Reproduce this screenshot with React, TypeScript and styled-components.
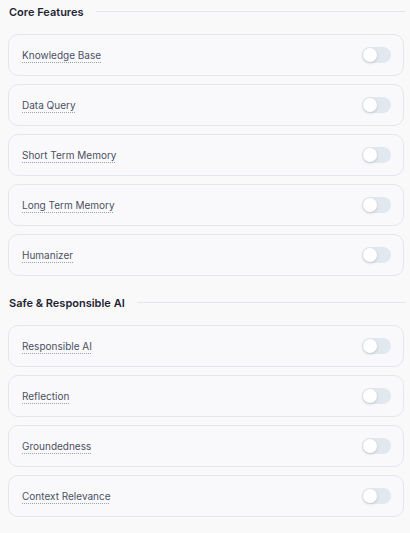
import React from 'react';
import { styled, createGlobalStyle } from 'styled-components';

const GlobalStyle = createGlobalStyle`
  html, body {
    margin: 0;
    padding: 0;
    background: #f9f9fa;
    font-family: Inter, "Noto Sans", sans-serif;
  }
`;

const sections = [
  {
    title: 'Core Features',
    items: ['Knowledge Base', 'Data Query', 'Short Term Memory', 'Long Term Memory', 'Humanizer'],
  },
  {
    title: 'Safe & Responsible AI',
    items: ['Responsible AI', 'Reflection', 'Groundedness', 'Context Relevance'],
  },
];

function App() {
  return (
    <Wrap>
      <GlobalStyle />
      {sections.map((section) => (
        <Section key={section.title}>
          <Heading>
            <Title>{section.title}</Title>
            <Rule />
          </Heading>
          <List>
            {section.items.map((item) => (
              <Card key={item}>
                <Label>{item}</Label>
                <Toggle>
                  <Knob />
                </Toggle>
              </Card>
            ))}
          </List>
        </Section>
      ))}
    </Wrap>
  );
}

export default App;

const Wrap = styled.div`
  width: 410px;
  height: 533px;
  box-sizing: border-box;
  padding: 3px 6px 0 8px;
  display: flex;
  flex-direction: column;
  gap: 18px;
  overflow: hidden;
`;

const Section = styled.div`
  display: flex;
  flex-direction: column;
  gap: 14px;
`;

const Heading = styled.div`
  display: flex;
  align-items: center;
  gap: 12px;
  padding-left: 1px;
  height: 17px;
`;

const Title = styled.span`
  font-size: 11px;
  font-weight: 600;
  color: #1f2433;
  white-space: nowrap;
`;

const Rule = styled.div`
  flex: 1;
  height: 1px;
  background: #e3e6ec;
  margin-right: -2px;
`;

const List = styled.div`
  display: flex;
  flex-direction: column;
  gap: 8px;
`;

const Card = styled.div`
  height: 42px;
  box-sizing: border-box;
  border: 1px solid #e2e6ef;
  border-radius: 10px;
  background: #f9f9fb;
  display: flex;
  align-items: center;
  justify-content: space-between;
  padding: 0 12px 0 13px;
`;

const Label = styled.span`
  font-size: 10px;
  color: #4a5061;
  text-decoration: underline dotted #9aa1b0;
  text-underline-offset: 3px;
`;

const Toggle = styled.div`
  width: 29px;
  height: 16px;
  border-radius: 8px;
  background: #e2e8f0;
  display: flex;
  align-items: center;
  padding: 1px;
  box-sizing: border-box;
`;

const Knob = styled.div`
  width: 14px;
  height: 14px;
  border-radius: 50%;
  background: #ffffff;
  box-shadow: 0 1px 3px rgba(15, 23, 42, 0.18);
`;
